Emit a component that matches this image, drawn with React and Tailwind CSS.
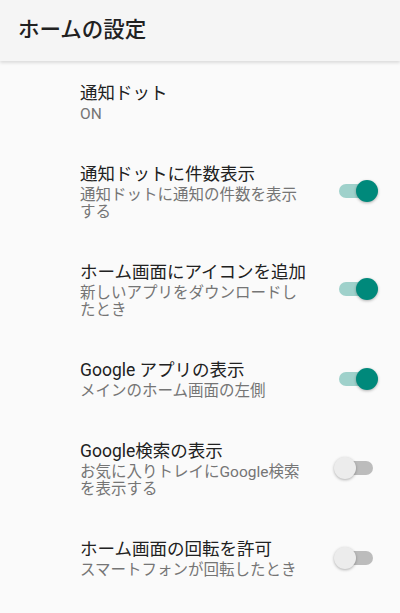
const items = [
  { title: '通知ドット', sub: 'ON', toggle: null },
  { title: '通知ドットに件数表示', sub: '通知ドットに通知の件数を表示する', toggle: true },
  { title: 'ホーム画面にアイコンを追加', sub: '新しいアプリをダウンロードしたとき', toggle: true },
  { title: 'Google アプリの表示', sub: 'メインのホーム画面の左側', toggle: true },
  { title: 'Google検索の表示', sub: 'お気に入りトレイにGoogle検索を表示する', toggle: false },
  { title: 'ホーム画面の回転を許可', sub: 'スマートフォンが回転したとき', toggle: false },
]

function Toggle({ on }) {
  return (
    <div className="relative w-[44px] h-[22px] flex items-center shrink-0">
      <div className={`ml-[5px] w-[34px] h-[14px] rounded-full ${on ? 'bg-[#9fd1cb]' : 'bg-[#bcbcbc]'}`} />
      <div
        className={`absolute top-0 w-[22px] h-[22px] rounded-full shadow-[0_1px_3px_rgba(0,0,0,0.3)] ${
          on ? 'right-0 bg-[#00897b]' : 'left-0 bg-[#ececec]'
        }`}
      />
    </div>
  )
}

export default function App() {
  return (
    <div
      className="w-[400px] h-[613px] bg-[#fafafa] overflow-hidden"
      style={{ fontFamily: 'Roboto, "Noto Sans CJK JP", sans-serif' }}
    >
      <div className="h-[61px] bg-[#f5f5f5] flex items-center px-[18px] shadow-[0_2px_3px_rgba(0,0,0,0.12)] relative">
        <h1 className="text-[21.5px] font-medium text-[#212121]">ホームの設定</h1>
      </div>
      <div>
        {items.map((it) => (
          <div key={it.title} className="flex items-center pl-[80px] pr-[22px] py-[19px]">
            <div className="w-[226px]">
              <div className="text-[17.5px] leading-[26px] text-[#212121] whitespace-nowrap">{it.title}</div>
              <div className="text-[15.5px] leading-[17px] text-[#757575]">{it.sub}</div>
            </div>
            <div className="flex-1" />
            {it.toggle !== null && <Toggle on={it.toggle} />}
          </div>
        ))}
      </div>
    </div>
  )
}
